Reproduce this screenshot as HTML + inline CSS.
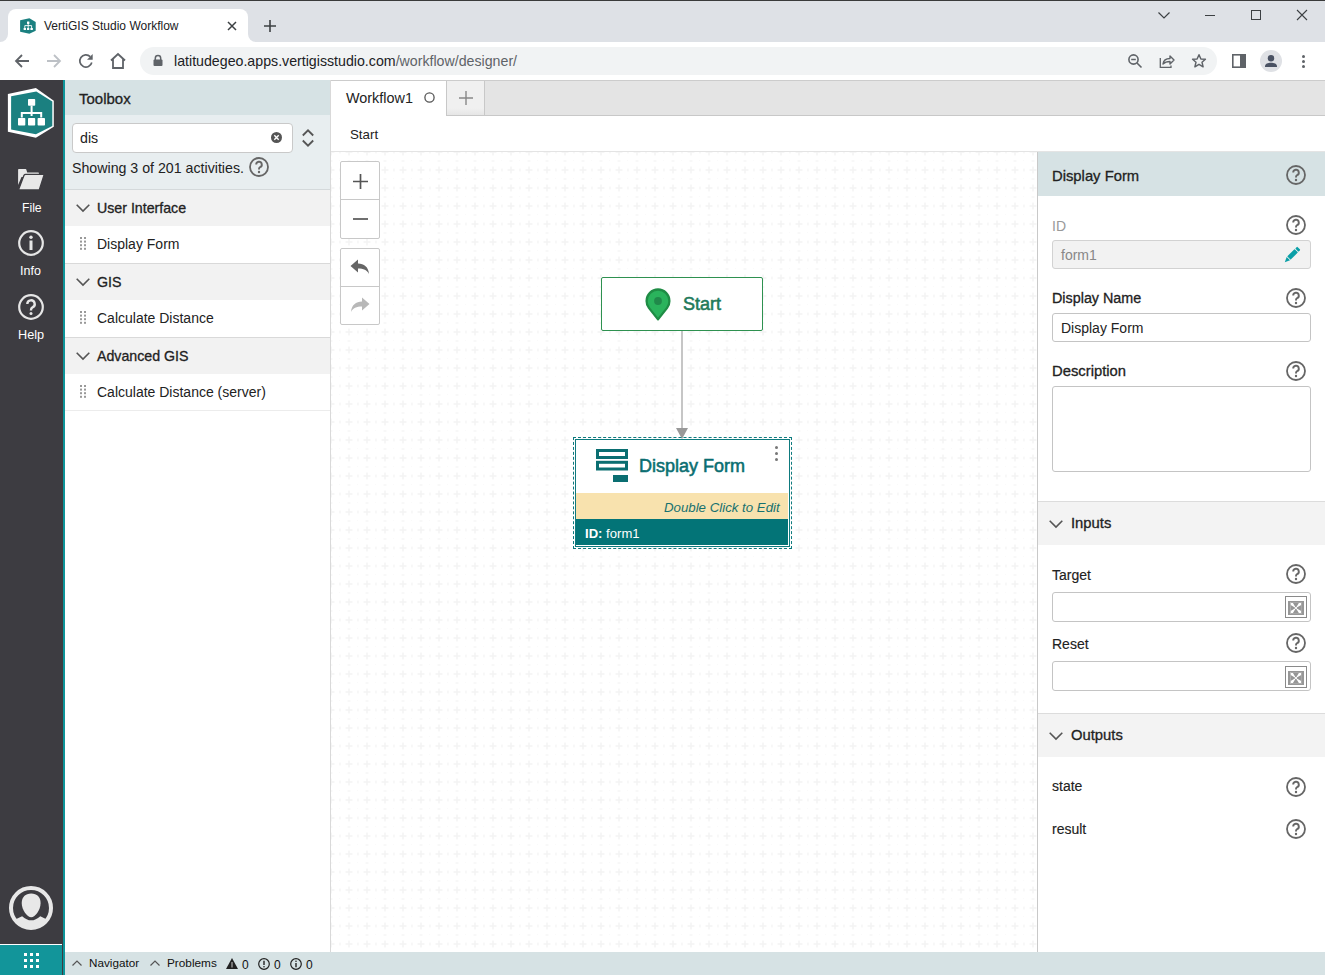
<!DOCTYPE html>
<html><head><meta charset="utf-8">
<style>
*{box-sizing:border-box;margin:0;padding:0}
html,body{width:1325px;height:975px;overflow:hidden;background:#fff;font-family:"Liberation Sans",sans-serif;color:#222}
.a{position:absolute}
.t{position:absolute;white-space:nowrap;line-height:1}
.sb{-webkit-text-stroke:0.3px currentColor}
.sm{-webkit-text-stroke:0.15px currentColor}
svg{position:absolute;overflow:visible}
</style></head><body>

<!-- Chrome title bar -->
<div class="a" style="left:0;top:0;width:1325px;height:42px;background:#dee1e6"></div>
<div class="a" style="left:0;top:0;width:1325px;height:1px;background:#3a3a3a"></div>
<!-- active tab -->
<div class="a" style="left:8px;top:9px;width:240px;height:34px;background:#fff;border-radius:8px 8px 0 0"></div>
<div class="a" style="left:0;top:34px;width:8px;height:8px;background:#fff"></div>
<div class="a" style="left:0;top:26px;width:8px;height:16px;background:#dee1e6;border-bottom-right-radius:8px"></div>
<div class="a" style="left:248px;top:34px;width:8px;height:8px;background:#fff"></div>
<div class="a" style="left:248px;top:26px;width:8px;height:16px;background:#dee1e6;border-bottom-left-radius:8px"></div>
<!-- favicon -->
<svg style="left:20px;top:18px" width="16" height="16" viewBox="0 0 16 16">
<polygon points="0.1,2.2 9.4,0.2 15.7,4.1 15.7,12.7 9.4,15.7 0.1,13.7" fill="#1b8080"/>
<rect x="7" y="3.4" width="2.4" height="2.5" rx="0.4" fill="#fff"/>
<path d="M8.2 5.9V10M4.8 10V7.6H11.6V10" stroke="#fff" stroke-width="0.9" fill="none"/>
<rect x="3.6" y="9.9" width="2.4" height="2" rx="0.3" fill="#fff"/><rect x="7" y="9.9" width="2.3" height="2" rx="0.3" fill="#fff"/><rect x="10.4" y="9.9" width="2.5" height="2" rx="0.3" fill="#fff"/>
</svg>
<div class="t" style="left:44px;top:20px;font-size:12px;color:#202124">VertiGIS Studio Workflow</div>
<svg style="left:228px;top:22px" width="8" height="8" viewBox="0 0 8 8"><path d="M0 0L8 8M8 0L0 8" stroke="#3c4043" stroke-width="1.5"/></svg>
<svg style="left:264px;top:20px" width="12" height="12" viewBox="0 0 12 12"><path d="M6 0V12M0 6H12" stroke="#3c4043" stroke-width="1.6"/></svg>
<!-- window controls -->
<svg style="left:1158px;top:12px" width="12" height="7" viewBox="0 0 12 7"><path d="M0.5 0.5L6 6L11.5 0.5" stroke="#3c4043" stroke-width="1.2" fill="none"/></svg>
<div class="a" style="left:1205px;top:15px;width:10px;height:1px;background:#3c4043"></div>
<div class="a" style="left:1251px;top:10px;width:10px;height:10px;border:1px solid #3c4043"></div>
<svg style="left:1297px;top:10px" width="10" height="10" viewBox="0 0 10 10"><path d="M0 0L10 10M10 0L0 10" stroke="#3c4043" stroke-width="1.1"/></svg>

<!-- toolbar -->
<div class="a" style="left:0;top:42px;width:1325px;height:38px;background:#fff"></div>
<svg style="left:15px;top:54px" width="14" height="14" viewBox="0 0 14 14"><path d="M7 1L1 7L7 13M1 7H14" stroke="#5f6368" stroke-width="1.8" fill="none"/></svg>
<svg style="left:47px;top:54px" width="14" height="14" viewBox="0 0 14 14"><path d="M7 1L13 7L7 13M13 7H0" stroke="#bdc1c6" stroke-width="1.8" fill="none"/></svg>
<svg style="left:79px;top:54px" width="14" height="14" viewBox="0 0 14 14"><path d="M12.8 8.5A6.1 6.1 0 1 1 11.2 2.6" stroke="#5f6368" stroke-width="1.7" fill="none"/><path d="M13.7 0V5.7H8Z" fill="#5f6368"/></svg>
<svg style="left:110px;top:53px" width="16" height="16" viewBox="0 0 16 16"><path d="M1 7.5L8 1L15 7.5M3 6V15H13V6" stroke="#5f6368" stroke-width="1.8" fill="none" stroke-linejoin="miter"/></svg>
<div class="a" style="left:140px;top:47px;width:1077px;height:28px;background:#f1f3f4;border-radius:14px"></div>
<svg style="left:153px;top:55px" width="10" height="11" viewBox="0 0 10 11"><path d="M2.3 5V3.3A2.7 2.7 0 0 1 7.7 3.3V5" stroke="#5f6368" stroke-width="1.5" fill="none"/><rect x="0.5" y="4.6" width="9" height="6.4" rx="1" fill="#5f6368"/></svg>
<div class="t" style="left:174px;top:54px;font-size:14.2px;color:#202124">latitudegeo.apps.vertigisstudio.com<span style="color:#5f6368">/workflow/designer/</span></div>
<svg style="left:1128px;top:54px" width="14" height="14" viewBox="0 0 14 14"><circle cx="5.5" cy="5.5" r="4.6" stroke="#5f6368" stroke-width="1.6" fill="none"/><path d="M3.2 5.5H7.8M9 9L13.5 13.5" stroke="#5f6368" stroke-width="1.6"/></svg>
<svg style="left:1159px;top:54px" width="16" height="14" viewBox="0 0 16 14"><path d="M1.3 4V13.3H12V11.6" stroke="#5f6368" stroke-width="1.3" fill="none"/><path d="M4 10C4.5 6 7 4.5 11 4.5V2L15 6L11 10V7.5C8 7.5 6 8 4 10Z" stroke="#5f6368" stroke-width="1.4" fill="none" stroke-linejoin="round"/></svg>
<svg style="left:1192px;top:54px" width="14" height="14" viewBox="0 0 14 14"><path d="M7 0.8L8.9 5L13.4 5.3L10 8.2L11.1 12.8L7 10.3L2.9 12.8L4 8.2L0.6 5.3L5.1 5Z" stroke="#5f6368" stroke-width="1.5" fill="none" stroke-linejoin="round"/></svg>
<svg style="left:1232px;top:54px" width="14" height="14" viewBox="0 0 14 14"><rect x="0.8" y="0.8" width="12.4" height="12.4" stroke="#5f6368" stroke-width="1.6" fill="none"/><rect x="8" y="0" width="6" height="14" fill="#5f6368"/></svg>
<div class="a" style="left:1260px;top:50px;width:22px;height:22px;border-radius:50%;background:#dfe1e5"></div>
<svg style="left:1260px;top:50px" width="22" height="22" viewBox="0 0 22 22"><circle cx="11" cy="8.3" r="3.2" fill="#4a5263"/><path d="M5 16.5C5 13.5 8 12.7 11 12.7S17 13.5 17 16.5V17H5Z" fill="#4a5263"/></svg>
<div class="a" style="left:1301.5px;top:54.5px;width:3px;height:3px;border-radius:50%;background:#5f6368"></div>
<div class="a" style="left:1301.5px;top:59.5px;width:3px;height:3px;border-radius:50%;background:#5f6368"></div>
<div class="a" style="left:1301.5px;top:64.5px;width:3px;height:3px;border-radius:50%;background:#5f6368"></div>

<!-- APP -->
<!-- left nav -->
<div class="a" style="left:0;top:80px;width:63px;height:895px;background:#3d3c41"></div>
<div class="a" style="left:63px;top:80px;width:2px;height:895px;background:#0e9499"></div>
<svg style="left:0;top:80px" width="63" height="65" viewBox="0 80 63 65">
<polygon points="7.9,94 35.9,87.9 53.8,100.8 53.8,126.7 35.9,137.8 7.9,131.7" fill="#fff"/>
<polygon points="11.1,96.2 36.3,91.6 52.3,101.6 52.3,125.9 35.9,134.2 11.1,129.5" fill="#1b8080"/>
<rect x="28" y="99" width="7.2" height="6.8" rx="0.8" fill="#fff"/>
<path d="M31.6 105.8V116 M21.8 117.5V113H41.2V117.5" stroke="#fff" stroke-width="2" fill="none"/>
<rect x="18" y="118" width="7.3" height="7.6" rx="0.8" fill="#fff"/>
<rect x="28" y="118" width="7.2" height="7.6" rx="0.8" fill="#fff"/>
<rect x="37.6" y="118" width="7.4" height="7.6" rx="0.8" fill="#fff"/>
</svg>
<!-- File -->
<svg style="left:17px;top:168px" width="28" height="23" viewBox="0 0 28 23">
<path d="M1.1 1.8Q1.1 1.1 1.8 1.1H8.6Q9.1 1.1 9.3 1.6L10.2 4.6H21.3Q21.9 4.6 21.9 5.2V9H4.5L1.1 17Z" fill="#e8e8e8"/>
<path d="M6.9 7.4Q7.6 6.4 8.6 6.4H26.3Q27.2 6.6 26.9 7.5L22.4 21.4Q22.2 21.9 21.6 21.9H2.4Q1.6 21.9 1.8 21.1Z" fill="#e8e8e8" stroke="#3d3c41" stroke-width="1.3" stroke-linejoin="round"/>
</svg>
<div class="t" style="left:22px;top:202px;font-size:12.2px;color:#fff">File</div>
<svg style="left:18px;top:230px" width="26" height="26" viewBox="0 0 26 26"><circle cx="13" cy="13" r="11.8" stroke="#e6e6e6" stroke-width="2.2" fill="none"/><circle cx="13" cy="7.3" r="1.7" fill="#e6e6e6"/><rect x="11.5" y="10.5" width="3" height="9.5" fill="#e6e6e6"/></svg>
<div class="t" style="left:20px;top:265px;font-size:12.5px;color:#fff">Info</div>
<svg style="left:18px;top:294px" width="26" height="26" viewBox="0 0 26 26"><circle cx="13" cy="13" r="11.8" stroke="#e6e6e6" stroke-width="2.2" fill="none"/><path d="M9.3 10A3.7 3.7 0 1 1 14.5 13.4C13.3 14 13 14.6 13 16V16.5" stroke="#e6e6e6" stroke-width="2.4" fill="none"/><circle cx="13" cy="19.6" r="1.5" fill="#e6e6e6"/></svg>
<div class="t" style="left:18px;top:329px;font-size:12.7px;color:#fff">Help</div>
<!-- avatar -->
<svg style="left:9px;top:886px" width="44" height="44" viewBox="0 0 44 44">
<defs><clipPath id="avc"><circle cx="22" cy="22" r="19.5"/></clipPath></defs>
<circle cx="22" cy="22" r="20" stroke="#e8e8e8" stroke-width="4" fill="none"/>
<g clip-path="url(#avc)"><path d="M22.2 7.5C28 7.5 31.6 11.2 31.6 17C31.6 24 26.2 31.3 22.2 31.3C18.2 31.3 12.7 24 12.7 17C12.7 11.2 16.4 7.5 22.2 7.5Z" fill="#e8e8e8"/><path d="M0 36.5L13.1 30.2Q22.2 38.5 31.3 30.2L44 36.5V44H0Z" fill="#e8e8e8"/></g>
</svg>
<div class="a" style="left:0;top:944px;width:62px;height:1px;background:#fff"></div>
<div class="a" style="left:0;top:945px;width:62px;height:30px;background:#12959a"></div>
<div class="a" style="left:62px;top:944px;width:1px;height:31px;background:#3d3c41"></div>
<svg style="left:24px;top:953px" width="15" height="15" viewBox="0 0 15 15" fill="#fff">
<rect x="0" y="0" width="3" height="3"/><rect x="6" y="0" width="3" height="3"/><rect x="12" y="0" width="3" height="3"/>
<rect x="0" y="6" width="3" height="3"/><rect x="6" y="6" width="3" height="3"/><rect x="12" y="6" width="3" height="3"/>
<rect x="0" y="12" width="3" height="3"/><rect x="6" y="12" width="3" height="3"/><rect x="12" y="12" width="3" height="3"/>
</svg>

<!-- toolbox -->
<div class="a" style="left:65px;top:80px;width:265px;height:35px;background:#d6e2e4"></div>
<div class="t sb" style="left:79px;top:91px;font-size:15px;color:#222">Toolbox</div>
<div class="a" style="left:65px;top:115px;width:265px;height:75px;background:#e8eef0"></div>
<div class="a" style="left:72px;top:123px;width:221px;height:30px;background:#fff;border:1px solid #c9c9c9;border-radius:4px"></div>
<div class="t" style="left:80px;top:131px;font-size:14.2px;color:#222">dis</div>
<svg style="left:271px;top:132px" width="11" height="11" viewBox="0 0 11 11"><circle cx="5.5" cy="5.5" r="5.5" fill="#555"/><path d="M3.3 3.3L7.7 7.7M7.7 3.3L3.3 7.7" stroke="#fff" stroke-width="1.4"/></svg>
<svg style="left:302px;top:129px" width="12" height="18" viewBox="0 0 12 18"><path d="M0.8 6.5L6 1.3L11.2 6.5M0.8 11.5L6 16.7L11.2 11.5" stroke="#555" stroke-width="1.8" fill="none"/></svg>
<div class="t" style="left:72px;top:161px;font-size:14.2px;color:#222">Showing 3 of 201 activities.</div>
<svg style="left:249px;top:157px" width="20" height="20" viewBox="0 0 20 20"><circle cx="10" cy="10" r="9" stroke="#666" stroke-width="1.8" fill="none"/><path d="M7.2 7.6A2.8 2.8 0 1 1 11 10.2C10.3 10.6 10 11 10 12V12.4" stroke="#666" stroke-width="1.9" fill="none"/><circle cx="10" cy="15" r="1.2" fill="#666"/></svg>
<div class="a" style="left:65px;top:189px;width:265px;height:1px;background:#d4d9db"></div>
<div class="a" style="left:65px;top:190px;width:265px;height:785px;background:#fff"></div>
<!-- categories -->
<div class="a" style="left:65px;top:190px;width:265px;height:36px;background:#f2f2f2"></div>
<svg style="left:76px;top:204px" width="14" height="8" viewBox="0 0 14 8"><path d="M0.7 0.7L7 7L13.3 0.7" stroke="#555" stroke-width="1.6" fill="none"/></svg>
<div class="t sb" style="left:97px;top:201px;font-size:14.2px;color:#222">User Interface</div>
<svg style="left:80px;top:237px" width="7" height="13" viewBox="0 0 7 13" fill="#999"><rect x="0" y="0" width="2" height="2"/><rect x="4" y="0" width="2" height="2"/><rect x="0" y="3.6" width="2" height="2"/><rect x="4" y="3.6" width="2" height="2"/><rect x="0" y="7.2" width="2" height="2"/><rect x="4" y="7.2" width="2" height="2"/><rect x="0" y="10.8" width="2" height="2"/><rect x="4" y="10.8" width="2" height="2"/></svg>
<div class="t" style="left:97px;top:237px;font-size:14px;color:#222">Display Form</div>
<div class="a" style="left:65px;top:263px;width:265px;height:1px;background:#d9d9d9"></div>
<div class="a" style="left:65px;top:264px;width:265px;height:36px;background:#f2f2f2"></div>
<svg style="left:76px;top:278px" width="14" height="8" viewBox="0 0 14 8"><path d="M0.7 0.7L7 7L13.3 0.7" stroke="#555" stroke-width="1.6" fill="none"/></svg>
<div class="t sb" style="left:97px;top:275px;font-size:14.2px;color:#222">GIS</div>
<svg style="left:80px;top:311px" width="7" height="13" viewBox="0 0 7 13" fill="#999"><rect x="0" y="0" width="2" height="2"/><rect x="4" y="0" width="2" height="2"/><rect x="0" y="3.6" width="2" height="2"/><rect x="4" y="3.6" width="2" height="2"/><rect x="0" y="7.2" width="2" height="2"/><rect x="4" y="7.2" width="2" height="2"/><rect x="0" y="10.8" width="2" height="2"/><rect x="4" y="10.8" width="2" height="2"/></svg>
<div class="t" style="left:97px;top:311px;font-size:14px;color:#222">Calculate Distance</div>
<div class="a" style="left:65px;top:337px;width:265px;height:1px;background:#d9d9d9"></div>
<div class="a" style="left:65px;top:338px;width:265px;height:36px;background:#f2f2f2"></div>
<svg style="left:76px;top:352px" width="14" height="8" viewBox="0 0 14 8"><path d="M0.7 0.7L7 7L13.3 0.7" stroke="#555" stroke-width="1.6" fill="none"/></svg>
<div class="t sb" style="left:97px;top:349px;font-size:14.2px;color:#222">Advanced GIS</div>
<svg style="left:80px;top:385px" width="7" height="13" viewBox="0 0 7 13" fill="#999"><rect x="0" y="0" width="2" height="2"/><rect x="4" y="0" width="2" height="2"/><rect x="0" y="3.6" width="2" height="2"/><rect x="4" y="3.6" width="2" height="2"/><rect x="0" y="7.2" width="2" height="2"/><rect x="4" y="7.2" width="2" height="2"/><rect x="0" y="10.8" width="2" height="2"/><rect x="4" y="10.8" width="2" height="2"/></svg>
<div class="t" style="left:97px;top:385px;font-size:14px;color:#222">Calculate Distance (server)</div>
<div class="a" style="left:65px;top:410px;width:265px;height:1px;background:#ececec"></div>
<div class="a" style="left:330px;top:80px;width:1px;height:872px;background:#d9d9d9"></div>

<!-- canvas -->
<div class="a" style="left:331px;top:80px;width:994px;height:1px;background:#cccccc"></div>
<div class="a" style="left:485px;top:81px;width:840px;height:34px;background:#e4e4e4"></div>
<div class="a" style="left:446px;top:81px;width:39px;height:35px;background:linear-gradient(#f0f0f0 80%,#e6e6e6);border:1px solid #c8c8c8;border-top:none"></div>
<svg style="left:459px;top:91px" width="14" height="14" viewBox="0 0 14 14"><path d="M7 0V14M0 7H14" stroke="#888" stroke-width="1.4"/></svg>
<div class="a" style="left:485px;top:115px;width:840px;height:1px;background:#c8c8c8"></div>
<div class="t" style="left:346px;top:91px;font-size:14.4px;color:#222">Workflow1</div>
<svg style="left:424px;top:92px" width="11" height="11" viewBox="0 0 11 11"><circle cx="5.5" cy="5.5" r="4.6" stroke="#555" stroke-width="1.3" fill="none"/></svg>
<div class="t" style="left:350px;top:128px;font-size:13.3px;color:#222">Start</div>
<div class="a" style="left:331px;top:151px;width:994px;height:1px;background:#e4e4e4"></div>
<svg style="left:331px;top:152px" width="706" height="800">
<defs><pattern id="gp" x="-9" y="9" width="18" height="18" patternUnits="userSpaceOnUse">
<path d="M9 5.5V12.5M5.5 9H12.5" stroke="#f4f4f4" stroke-width="1.5"/>
<path d="M18 7.5V10.5M7.5 18H10.5" stroke="#f6f6f6" stroke-width="1.6"/>
<path d="M0 7.5V10.5M7.5 0H10.5" stroke="#f6f6f6" stroke-width="1.6"/>
<rect x="17.2" y="17.2" width="1.6" height="1.6" fill="#f8f8f8"/>
</pattern></defs>
<rect width="706" height="800" fill="url(#gp)"/>
</svg>

<!-- zoom controls -->
<div class="a" style="left:340px;top:161px;width:40px;height:78px;background:#fff;border:1px solid #c8c8c8;border-radius:2px"></div>
<div class="a" style="left:341px;top:199px;width:38px;height:1px;background:#c8c8c8"></div>
<svg style="left:353px;top:174px" width="15" height="15" viewBox="0 0 15 15"><path d="M7.5 0V15M0 7.5H15" stroke="#555" stroke-width="1.7"/></svg>
<svg style="left:353px;top:218px" width="15" height="2" viewBox="0 0 15 2"><path d="M0 1H15" stroke="#555" stroke-width="1.7"/></svg>
<div class="a" style="left:340px;top:248px;width:40px;height:77px;background:#fff;border:1px solid #c8c8c8;border-radius:2px"></div>
<div class="a" style="left:341px;top:286px;width:38px;height:1px;background:#c8c8c8"></div>
<svg style="left:350px;top:259px" width="20" height="16" viewBox="0 0 20 16"><path d="M0.5 7L8 0.5V4.5C14 4.5 18.5 8 19 15C17 11 13.5 9.5 8 9.5V13.5Z" fill="#666"/></svg>
<svg style="left:350px;top:297px" width="20" height="16" viewBox="0 0 20 16"><path d="M19.5 7L12 0.5V4.5C6 4.5 1.5 8 1 15C3 11 6.5 9.5 12 9.5V13.5Z" fill="#b8b8b8"/></svg>

<!-- Start node -->
<div class="a" style="left:601px;top:277px;width:162px;height:54px;background:#fff;border:1px solid #2e9150;border-radius:2px"></div>
<svg style="left:645px;top:287px" width="26" height="34" viewBox="0 0 26 34"><path d="M13 32.4L3.9 20.9C2.1 18.6 1.6 16.4 1.6 13.9A11.4 11.4 0 0 1 24.4 13.9C24.4 16.4 23.9 18.6 22.1 20.9Z" fill="#2ab35c" stroke="#1f8c45" stroke-width="2.3" stroke-linejoin="round"/><circle cx="13" cy="14" r="3.9" fill="#20894a"/></svg>
<div class="t" style="left:683px;top:295px;font-size:18px;color:#217a5a;-webkit-text-stroke:0.55px #217a5a">Start</div>
<div class="a" style="left:681px;top:331px;width:2px;height:98px;background:#c6c6c6"></div>
<svg style="left:676px;top:428px" width="12" height="11" viewBox="0 0 12 11"><path d="M0 0H12L6 11Z" fill="#999"/></svg>

<!-- Display Form node -->
<div class="a" style="left:573px;top:437px;width:219px;height:112px;border:1px dashed #0e7a7e"></div>
<div class="a" style="left:575px;top:439px;width:215px;height:108px;background:#fff;border:1px solid #0e7a7e"></div>
<svg style="left:596px;top:449px" width="32" height="34" viewBox="0 0 32 34">
<rect x="1.5" y="1.5" width="29" height="7" stroke="#0a6e71" stroke-width="3" fill="none"/>
<rect x="1.5" y="13.3" width="29" height="6.7" stroke="#0a6e71" stroke-width="3" fill="none"/>
<rect x="17" y="26" width="15" height="7" fill="#0a6e71"/>
</svg>
<div class="t" style="left:639px;top:457px;font-size:18px;color:#0a6e71;-webkit-text-stroke:0.55px #0a6e71">Display Form</div>
<div class="a" style="left:775px;top:446px;width:3px;height:3px;border-radius:50%;background:#777"></div>
<div class="a" style="left:775px;top:452px;width:3px;height:3px;border-radius:50%;background:#777"></div>
<div class="a" style="left:775px;top:458px;width:3px;height:3px;border-radius:50%;background:#777"></div>
<div class="a" style="left:576px;top:493px;width:212px;height:26px;background:#f8e2ae"></div>
<div class="t" style="left:664px;top:501px;font-size:13.25px;font-style:italic;color:#17716f">Double Click to Edit</div>
<div class="a" style="left:576px;top:519px;width:212px;height:26px;background:#037477"></div>
<div class="t" style="left:585px;top:527px;font-size:13.1px;color:#fff"><b>ID:</b> form1</div>

<!-- right panel -->
<div class="a" style="left:1037px;top:152px;width:1px;height:800px;background:#c9c9c9"></div>
<div class="a" style="left:1038px;top:152px;width:287px;height:44px;background:#d6e2e4"></div>
<div class="t sb" style="left:1052px;top:169px;font-size:14.8px;color:#222">Display Form</div>
<svg style="left:1286px;top:165px" width="20" height="20" viewBox="0 0 20 20"><circle cx="10" cy="10" r="9" stroke="#666" stroke-width="1.8" fill="none"/><path d="M7.2 7.6A2.8 2.8 0 1 1 11 10.2C10.3 10.6 10 11 10 12V12.4" stroke="#666" stroke-width="1.9" fill="none"/><circle cx="10" cy="15" r="1.2" fill="#666"/></svg>
<div class="t" style="left:1052px;top:219px;font-size:14px;color:#999">ID</div>
<svg style="left:1286px;top:215px" width="20" height="20" viewBox="0 0 20 20"><circle cx="10" cy="10" r="9" stroke="#666" stroke-width="1.8" fill="none"/><path d="M7.2 7.6A2.8 2.8 0 1 1 11 10.2C10.3 10.6 10 11 10 12V12.4" stroke="#666" stroke-width="1.9" fill="none"/><circle cx="10" cy="15" r="1.2" fill="#666"/></svg>
<div class="a" style="left:1052px;top:240px;width:259px;height:29px;background:#f2f2f2;border:1px solid #d2d2d2;border-radius:3px"></div>
<div class="t" style="left:1061px;top:248px;font-size:14px;color:#888">form1</div>
<svg style="left:1283px;top:245px" width="19" height="19" viewBox="0 0 19 19"><g transform="translate(1.8,17.2) rotate(-45)" fill="#0a9fa7"><path d="M0 0L5 -2.4V2.4Z"/><rect x="5.8" y="-2.4" width="10.4" height="4.8" rx="0.6"/><rect x="17" y="-2.3" width="2.8" height="4.6" rx="0.8"/></g></svg>
<div class="t sb" style="left:1052px;top:291px;font-size:14.35px;color:#222">Display Name</div>
<svg style="left:1286px;top:288px" width="20" height="20" viewBox="0 0 20 20"><circle cx="10" cy="10" r="9" stroke="#666" stroke-width="1.8" fill="none"/><path d="M7.2 7.6A2.8 2.8 0 1 1 11 10.2C10.3 10.6 10 11 10 12V12.4" stroke="#666" stroke-width="1.9" fill="none"/><circle cx="10" cy="15" r="1.2" fill="#666"/></svg>
<div class="a" style="left:1052px;top:313px;width:259px;height:29px;background:#fff;border:1px solid #c4c4c4;border-radius:3px"></div>
<div class="t" style="left:1061px;top:321px;font-size:14px;color:#222">Display Form</div>
<div class="t sb" style="left:1052px;top:364px;font-size:14.8px;color:#222">Description</div>
<svg style="left:1286px;top:361px" width="20" height="20" viewBox="0 0 20 20"><circle cx="10" cy="10" r="9" stroke="#666" stroke-width="1.8" fill="none"/><path d="M7.2 7.6A2.8 2.8 0 1 1 11 10.2C10.3 10.6 10 11 10 12V12.4" stroke="#666" stroke-width="1.9" fill="none"/><circle cx="10" cy="15" r="1.2" fill="#666"/></svg>
<div class="a" style="left:1052px;top:386px;width:259px;height:86px;background:#fff;border:1px solid #c4c4c4;border-radius:3px"></div>
<div class="a" style="left:1038px;top:501px;width:287px;height:1px;background:#dcdcdc"></div>
<div class="a" style="left:1038px;top:502px;width:287px;height:43px;background:#f3f3f3"></div>
<svg style="left:1049px;top:520px" width="14" height="8" viewBox="0 0 14 8"><path d="M0.7 0.7L7 7L13.3 0.7" stroke="#555" stroke-width="1.6" fill="none"/></svg>
<div class="t sb" style="left:1071px;top:516px;font-size:14.8px;color:#222">Inputs</div>
<div class="t sm" style="left:1052px;top:568px;font-size:14px;color:#222">Target</div>
<svg style="left:1286px;top:564px" width="20" height="20" viewBox="0 0 20 20"><circle cx="10" cy="10" r="9" stroke="#666" stroke-width="1.8" fill="none"/><path d="M7.2 7.6A2.8 2.8 0 1 1 11 10.2C10.3 10.6 10 11 10 12V12.4" stroke="#666" stroke-width="1.9" fill="none"/><circle cx="10" cy="15" r="1.2" fill="#666"/></svg>
<div class="a" style="left:1052px;top:592px;width:259px;height:30px;background:#fff;border:1px solid #c4c4c4;border-radius:3px"></div>
<div class="a" style="left:1285px;top:596px;width:22px;height:22px;border:1px solid #8a8a8a;background:#fff"></div>
<svg style="left:1288px;top:601px" width="16" height="14" viewBox="0 0 16 14"><rect width="16" height="14" fill="#979797"/><rect x="2.6" y="1.8" width="10.6" height="10.4" fill="#fff"/><path d="M4.8 1.8H11L7.9 7ZM4.8 12.2H11L7.9 7ZM2.6 4H2.6L7.9 7L2.6 10ZM13.2 4L7.9 7L13.2 10Z" fill="#979797"/><path d="M2.6 1.8L13.2 12.2M13.2 1.8L2.6 12.2" stroke="#fff" stroke-width="0.9"/></svg>
<div class="t sm" style="left:1052px;top:637px;font-size:14px;color:#222">Reset</div>
<svg style="left:1286px;top:633px" width="20" height="20" viewBox="0 0 20 20"><circle cx="10" cy="10" r="9" stroke="#666" stroke-width="1.8" fill="none"/><path d="M7.2 7.6A2.8 2.8 0 1 1 11 10.2C10.3 10.6 10 11 10 12V12.4" stroke="#666" stroke-width="1.9" fill="none"/><circle cx="10" cy="15" r="1.2" fill="#666"/></svg>
<div class="a" style="left:1052px;top:661px;width:259px;height:30px;background:#fff;border:1px solid #c4c4c4;border-radius:3px"></div>
<div class="a" style="left:1285px;top:666px;width:22px;height:22px;border:1px solid #8a8a8a;background:#fff"></div>
<svg style="left:1288px;top:671px" width="16" height="14" viewBox="0 0 16 14"><rect width="16" height="14" fill="#979797"/><rect x="2.6" y="1.8" width="10.6" height="10.4" fill="#fff"/><path d="M4.8 1.8H11L7.9 7ZM4.8 12.2H11L7.9 7ZM2.6 4H2.6L7.9 7L2.6 10ZM13.2 4L7.9 7L13.2 10Z" fill="#979797"/><path d="M2.6 1.8L13.2 12.2M13.2 1.8L2.6 12.2" stroke="#fff" stroke-width="0.9"/></svg>
<div class="a" style="left:1038px;top:713px;width:287px;height:1px;background:#dcdcdc"></div>
<div class="a" style="left:1038px;top:714px;width:287px;height:43px;background:#f3f3f3"></div>
<svg style="left:1049px;top:732px" width="14" height="8" viewBox="0 0 14 8"><path d="M0.7 0.7L7 7L13.3 0.7" stroke="#555" stroke-width="1.6" fill="none"/></svg>
<div class="t sb" style="left:1071px;top:728px;font-size:14.8px;color:#222">Outputs</div>
<div class="t sm" style="left:1052px;top:779px;font-size:14px;color:#222">state</div>
<svg style="left:1286px;top:777px" width="20" height="20" viewBox="0 0 20 20"><circle cx="10" cy="10" r="9" stroke="#666" stroke-width="1.8" fill="none"/><path d="M7.2 7.6A2.8 2.8 0 1 1 11 10.2C10.3 10.6 10 11 10 12V12.4" stroke="#666" stroke-width="1.9" fill="none"/><circle cx="10" cy="15" r="1.2" fill="#666"/></svg>
<div class="t sm" style="left:1052px;top:822px;font-size:14px;color:#222">result</div>
<svg style="left:1286px;top:819px" width="20" height="20" viewBox="0 0 20 20"><circle cx="10" cy="10" r="9" stroke="#666" stroke-width="1.8" fill="none"/><path d="M7.2 7.6A2.8 2.8 0 1 1 11 10.2C10.3 10.6 10 11 10 12V12.4" stroke="#666" stroke-width="1.9" fill="none"/><circle cx="10" cy="15" r="1.2" fill="#666"/></svg>

<!-- status bar -->
<div class="a" style="left:65px;top:952px;width:1260px;height:23px;background:#d6e2e4"></div>
<svg style="left:72px;top:960px" width="10" height="6" viewBox="0 0 10 6"><path d="M0.5 5.5L5 1L9.5 5.5" stroke="#555" stroke-width="1.2" fill="none"/></svg>
<div class="t" style="left:89px;top:957px;font-size:11.7px;color:#111">Navigator</div>
<svg style="left:150px;top:960px" width="10" height="6" viewBox="0 0 10 6"><path d="M0.5 5.5L5 1L9.5 5.5" stroke="#555" stroke-width="1.2" fill="none"/></svg>
<div class="t" style="left:167px;top:958px;font-size:11.8px;color:#111">Problems</div>
<svg style="left:226px;top:958px" width="12" height="11" viewBox="0 0 12 11"><path d="M6 0L12 11H0Z" fill="#222"/><path d="M6 4V9.5" stroke="#999" stroke-width="1.4"/></svg>
<div class="t" style="left:242px;top:959px;font-size:12px;color:#111">0</div>
<svg style="left:258px;top:958px" width="12" height="12" viewBox="0 0 12 12"><circle cx="6" cy="6" r="5.3" stroke="#222" stroke-width="1.2" fill="none"/><path d="M6 2.8V7" stroke="#222" stroke-width="1.4"/><circle cx="6" cy="8.8" r="0.8" fill="#222"/></svg>
<div class="t" style="left:274px;top:959px;font-size:12px;color:#111">0</div>
<svg style="left:290px;top:958px" width="12" height="12" viewBox="0 0 12 12"><circle cx="6" cy="6" r="5.3" stroke="#222" stroke-width="1.2" fill="none"/><path d="M6 5V9.2" stroke="#222" stroke-width="1.4"/><circle cx="6" cy="3.2" r="0.8" fill="#222"/></svg>
<div class="t" style="left:306px;top:959px;font-size:12px;color:#111">0</div>

</body></html>
